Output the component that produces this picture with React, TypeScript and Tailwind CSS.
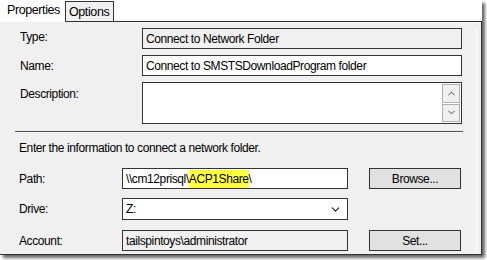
import { ChevronDown, ChevronUp } from "lucide-react";

const font = "font-['Liberation_Sans',Arial,sans-serif] text-[12px] tracking-[-0.4px] text-black";

function Field({ label, children, pad }: { label: string; children: React.ReactNode; pad?: string }) {
  return (
    <div className="flex items-start">
      <div className={`w-[142px] pl-[20px] ${pad ?? ""}`}>{label}</div>
      {children}
    </div>
  );
}

export default function App() {
  return (
    <div className={`h-[260px] w-[487px] bg-white ${font}`}>
      <div className="flex h-[255px] w-[482px] flex-col shadow-[3px_3px_3px_rgba(0,0,0,0.6)]">
        {/* tab strip */}
        <div className="flex h-[22px] bg-white">
          <div className="h-[22px] w-[65px] bg-white pl-[7px] pt-[1px] text-[12.5px]">Properties</div>
          <div className="mt-[1px] h-[21px] w-[49px] border border-[#333] bg-[#f0f0f0] pl-[3px] pt-[1px] text-[12.5px]">
            Options
          </div>
          <div className="flex-1 border-b border-[#333]" />
        </div>

        {/* panel */}
        <div className="flex flex-1 flex-col border-r border-b border-[#333] bg-[#f0f0f0] pt-[6px] pr-[4px]">
          <div className="flex flex-col gap-[6px] border-r border-white pr-[14px]">
            <Field label="Type:">
              <div className="flex h-[21px] w-[320px] items-center border border-[#333] bg-[#f0f0f0] px-[3px]">
                Connect to Network Folder
              </div>
            </Field>
            <Field label="Name:" pad="pt-[2px]">
              <div className="flex h-[21px] w-[320px] items-center border border-[#333] bg-white px-[3px]">
                Connect to SMSTSDownloadProgram folder
              </div>
            </Field>
            <Field label="Description:" pad="pt-[3px]">
              <div className="flex h-[42px] w-[320px] justify-end border border-[#333] bg-white p-[1px]">
                <div className="flex flex-col gap-[1px]">
                  <div className="flex h-[19px] w-[18px] items-center justify-center border border-[#b0b0b0] bg-[#f0f0f0]">
                    <ChevronUp size={11} strokeWidth={1.8} className="text-[#222]" />
                  </div>
                  <div className="flex h-[19px] w-[18px] items-center justify-center border border-[#b0b0b0] bg-[#f0f0f0]">
                    <ChevronDown size={11} strokeWidth={1.8} className="text-[#222]" />
                  </div>
                </div>
              </div>
            </Field>

            <div className="ml-[15px] mt-[1px] mr-[-1px] h-[2px] border-t border-[#555] border-b border-b-white" />

            <div className="ml-[19px]">Enter the information to connect a network folder.</div>

            <div className="mt-[5px] flex flex-col">
              <div className="flex items-center">
                <div className="w-[122px] pl-[19px]">Path:</div>
                <div className="flex h-[21px] w-[226px] items-center border border-[#333] bg-white px-[3px]">
                  \\cm12prisql\<span className="bg-[#ffff40]">ACP1Share</span>\
                </div>
                <button className="ml-[21px] h-[21px] w-[92px] border border-[#333] bg-[#e1e1e1]">
                  Browse...
                </button>
              </div>
              <div className="mt-[9px] flex items-center">
                <div className="w-[122px] pl-[19px]">Drive:</div>
                <div className="flex h-[22px] w-[226px] items-center justify-between border border-[#333] bg-white pl-[3px] pr-[5px]">
                  <span>Z:</span>
                  <ChevronDown size={13} strokeWidth={2} className="text-[#222]" />
                </div>
              </div>
              <div className="mt-[10px] flex items-center">
                <div className="w-[122px] pl-[19px]">Account:</div>
                <div className="flex h-[21px] w-[226px] items-center border border-[#333] bg-[#f0f0f0] px-[3px]">
                  tailspintoys\administrator
                </div>
                <button className="ml-[21px] h-[21px] w-[92px] border border-[#333] bg-[#e1e1e1]">
                  Set...
                </button>
              </div>
            </div>
          </div>
        </div>
      </div>
    </div>
  );
}
